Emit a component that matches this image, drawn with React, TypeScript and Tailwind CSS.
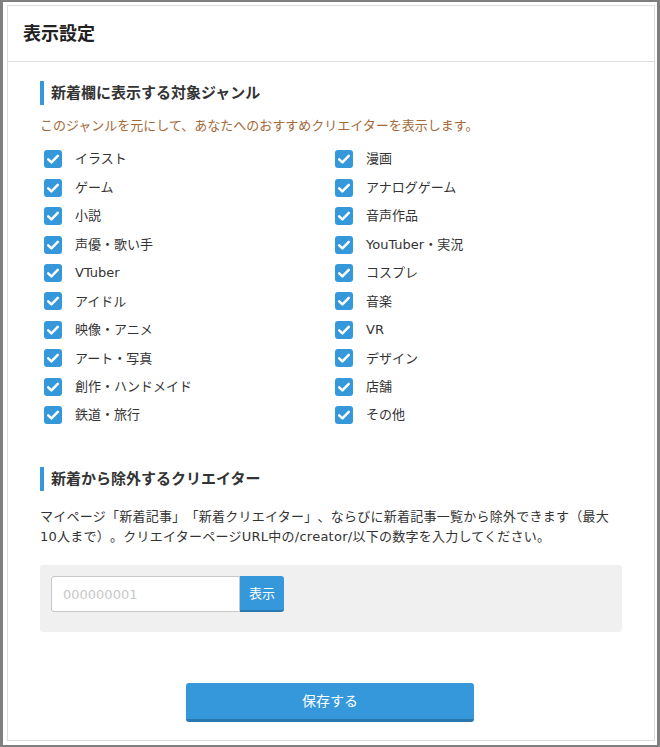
const genres: [string, string][] = [
  ['イラスト', '漫画'],
  ['ゲーム', 'アナログゲーム'],
  ['小説', '音声作品'],
  ['声優・歌い手', 'YouTuber・実況'],
  ['VTuber', 'コスプレ'],
  ['アイドル', '音楽'],
  ['映像・アニメ', 'VR'],
  ['アート・写真', 'デザイン'],
  ['創作・ハンドメイド', '店舗'],
  ['鉄道・旅行', 'その他'],
]

function CheckItem({ label }: { label: string }) {
  return (
    <label className="flex h-[28.45px] items-center pl-1">
      <span className="flex h-[18px] w-[18px] items-center justify-center rounded-[3px] bg-[#3498db]">
        <svg viewBox="0 0 18 18" className="h-[18px] w-[18px]">
          <path d="M4.2 9.4 7.4 12.4 13.8 5.8" fill="none" stroke="#fff" strokeWidth="2.5" strokeLinecap="round" strokeLinejoin="round" />
        </svg>
      </span>
      <span className="ml-[13px] text-[13px] text-[#333]">{label}</span>
    </label>
  )
}

function SectionTitle({ children }: { children: string }) {
  return (
    <h3 className="flex h-[24px] items-center border-l-4 border-[#3498db] pl-[7px] text-[15px] font-bold text-[#333]">
      {children}
    </h3>
  )
}

export default function App() {
  return (
    <div
      className="h-[747px] w-[660px] bg-[#7f7f7f] pt-[2px] pr-[3px] pb-[2px] pl-[3px] [text-spacing-trim:space-all]"
      style={{ fontFamily: '"DejaVu Sans", "Noto Sans CJK JP", sans-serif' }}
    >
      <div className="h-full bg-white pt-[3px] pr-[2px] pb-[4px] pl-[4px]">
        <div className="flex h-full flex-col border border-[#ddd]">
          <div className="flex h-[56px] items-center border-b border-[#ddd] px-[15px]">
            <h2 className="text-[18px] font-bold text-[#222]">表示設定</h2>
          </div>

          <div className="flex-1 px-[32px] pt-[19px]">
            <SectionTitle>新着欄に表示する対象ジャンル</SectionTitle>
            <p className="mt-[11px] text-[13px] leading-[20px] text-[#a5693a]">
              このジャンルを元にして、あなたへのおすすめクリエイターを表示します。
            </p>
            <div className="mt-[9px] grid grid-cols-2">
              {genres.map(([a, b]) => (
                <div key={a} className="contents">
                  <CheckItem label={a} />
                  <CheckItem label={b} />
                </div>
              ))}
            </div>

            <div className="mt-[38px]">
              <SectionTitle>新着から除外するクリエイター</SectionTitle>
            </div>
            <p className="mt-[16px] text-[13px] leading-[20px] tracking-[0.25px] text-[#333]">
              マイページ「新着記事」「新着クリエイター」、ならびに新着記事一覧から除外できます（最大10人まで）。クリエイターページURL中の/creator/以下の数字を入力してください。
            </p>
            <div className="mt-[18px] flex h-[67px] items-start rounded-[3px] bg-[#f0f0f0] px-[11px] pt-[11px]">
              <input
                className="h-[36px] w-[189px] rounded-l-[3px] border border-[#c8c8c8] bg-white px-[11px] text-[13px] text-[#333] outline-none placeholder:text-[#c8c8c8]"
                placeholder="000000001"
              />
              <button className="h-[36px] w-[44px] rounded-r-[3px] border-b-2 border-[#2a78b0] bg-[#3498db] text-[13px] text-white">
                表示
              </button>
            </div>
          </div>

          <div className="flex justify-center pb-[18px]">
            <button className="ml-[-2px] h-[39px] w-[288px] rounded-[3px] border-b-[3px] border-[#2a78b0] bg-[#3498db] text-[14px] text-white">
              保存する
            </button>
          </div>
        </div>
      </div>
    </div>
  )
}
